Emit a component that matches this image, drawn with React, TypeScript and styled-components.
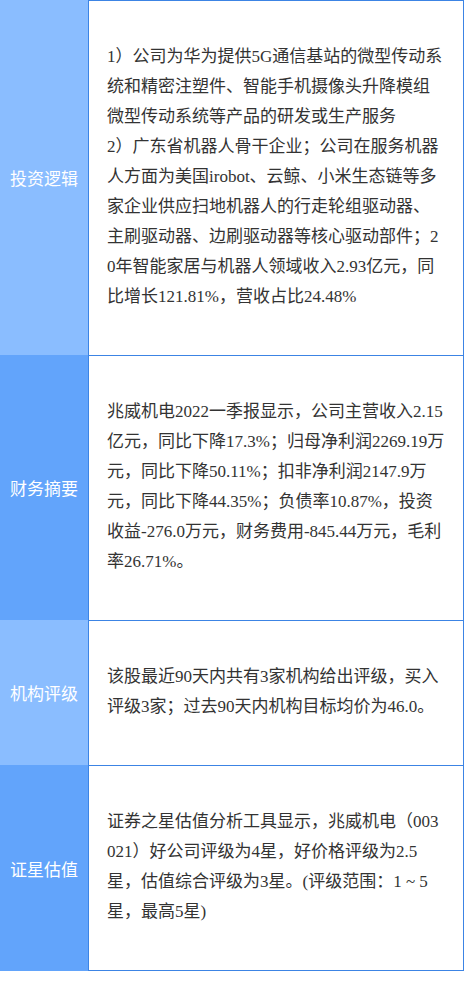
import React from 'react';
import styled, { createGlobalStyle } from 'styled-components';

const GlobalStyle = createGlobalStyle`
  body {
    margin: 0;
    background: #ffffff;
  }
`;

const Table = styled.div`
  width: 464px;
  display: flex;
  flex-direction: column;
  font-family: 'Liberation Serif', 'Noto Sans CJK SC', serif;
`;

const Row = styled.div`
  display: grid;
  grid-template-columns: 88px 1fr;
`;

const Label = styled.div<{ $shade: 'light' | 'dark' }>`
  display: flex;
  align-items: center;
  justify-content: center;
  background: ${(props) => (props.$shade === 'light' ? '#8abdff' : '#62a4fb')};
  color: #ffffff;
  font-family: 'Noto Sans CJK SC', sans-serif;
  font-size: 17px;
`;

const Cell = styled.div<{ $last?: boolean }>`
  border: 1px solid #3c84e4;
  border-bottom: ${(props) => (props.$last ? '1px solid #3c84e4' : 'none')};
  padding: 41px 18px 43px;
  color: #333333;
  font-size: 17px;
  line-height: 30px;
  word-break: break-all;
`;

const Para = styled.p`
  margin: 0;
`;

type Item = { label: string; shade: 'light' | 'dark'; lines: string[] };

const items: Item[] = [
  {
    label: '投资逻辑',
    shade: 'light',
    lines: [
      '1）公司为华为提供5G通信基站的微型传动系统和精密注塑件、智能手机摄像头升降模组微型传动系统等产品的研发或生产服务',
      '2）广东省机器人骨干企业；公司在服务机器人方面为美国irobot、云鲸、小米生态链等多家企业供应扫地机器人的行走轮组驱动器、主刷驱动器、边刷驱动器等核心驱动部件；20年智能家居与机器人领域收入2.93亿元，同比增长121.81%，营收占比24.48%',
    ],
  },
  {
    label: '财务摘要',
    shade: 'dark',
    lines: [
      '兆威机电2022一季报显示，公司主营收入2.15亿元，同比下降17.3%；归母净利润2269.19万元，同比下降50.11%；扣非净利润2147.9万元，同比下降44.35%；负债率10.87%，投资收益-276.0万元，财务费用-845.44万元，毛利率26.71%。',
    ],
  },
  {
    label: '机构评级',
    shade: 'light',
    lines: ['该股最近90天内共有3家机构给出评级，买入评级3家；过去90天内机构目标均价为46.0。'],
  },
  {
    label: '证星估值',
    shade: 'dark',
    lines: [
      '证券之星估值分析工具显示，兆威机电（003021）好公司评级为4星，好价格评级为2.5星，估值综合评级为3星。(评级范围：1 ~ 5星，最高5星)',
    ],
  },
];

const App = () => {
  return (
    <>
      <GlobalStyle />
      <Table>
        {items.map((item, i) => (
          <Row key={item.label}>
            <Label $shade={item.shade}>{item.label}</Label>
            <Cell $last={i === items.length - 1}>
              {item.lines.map((line) => (
                <Para key={line}>{line}</Para>
              ))}
            </Cell>
          </Row>
        ))}
      </Table>
    </>
  );
};

export default App;
